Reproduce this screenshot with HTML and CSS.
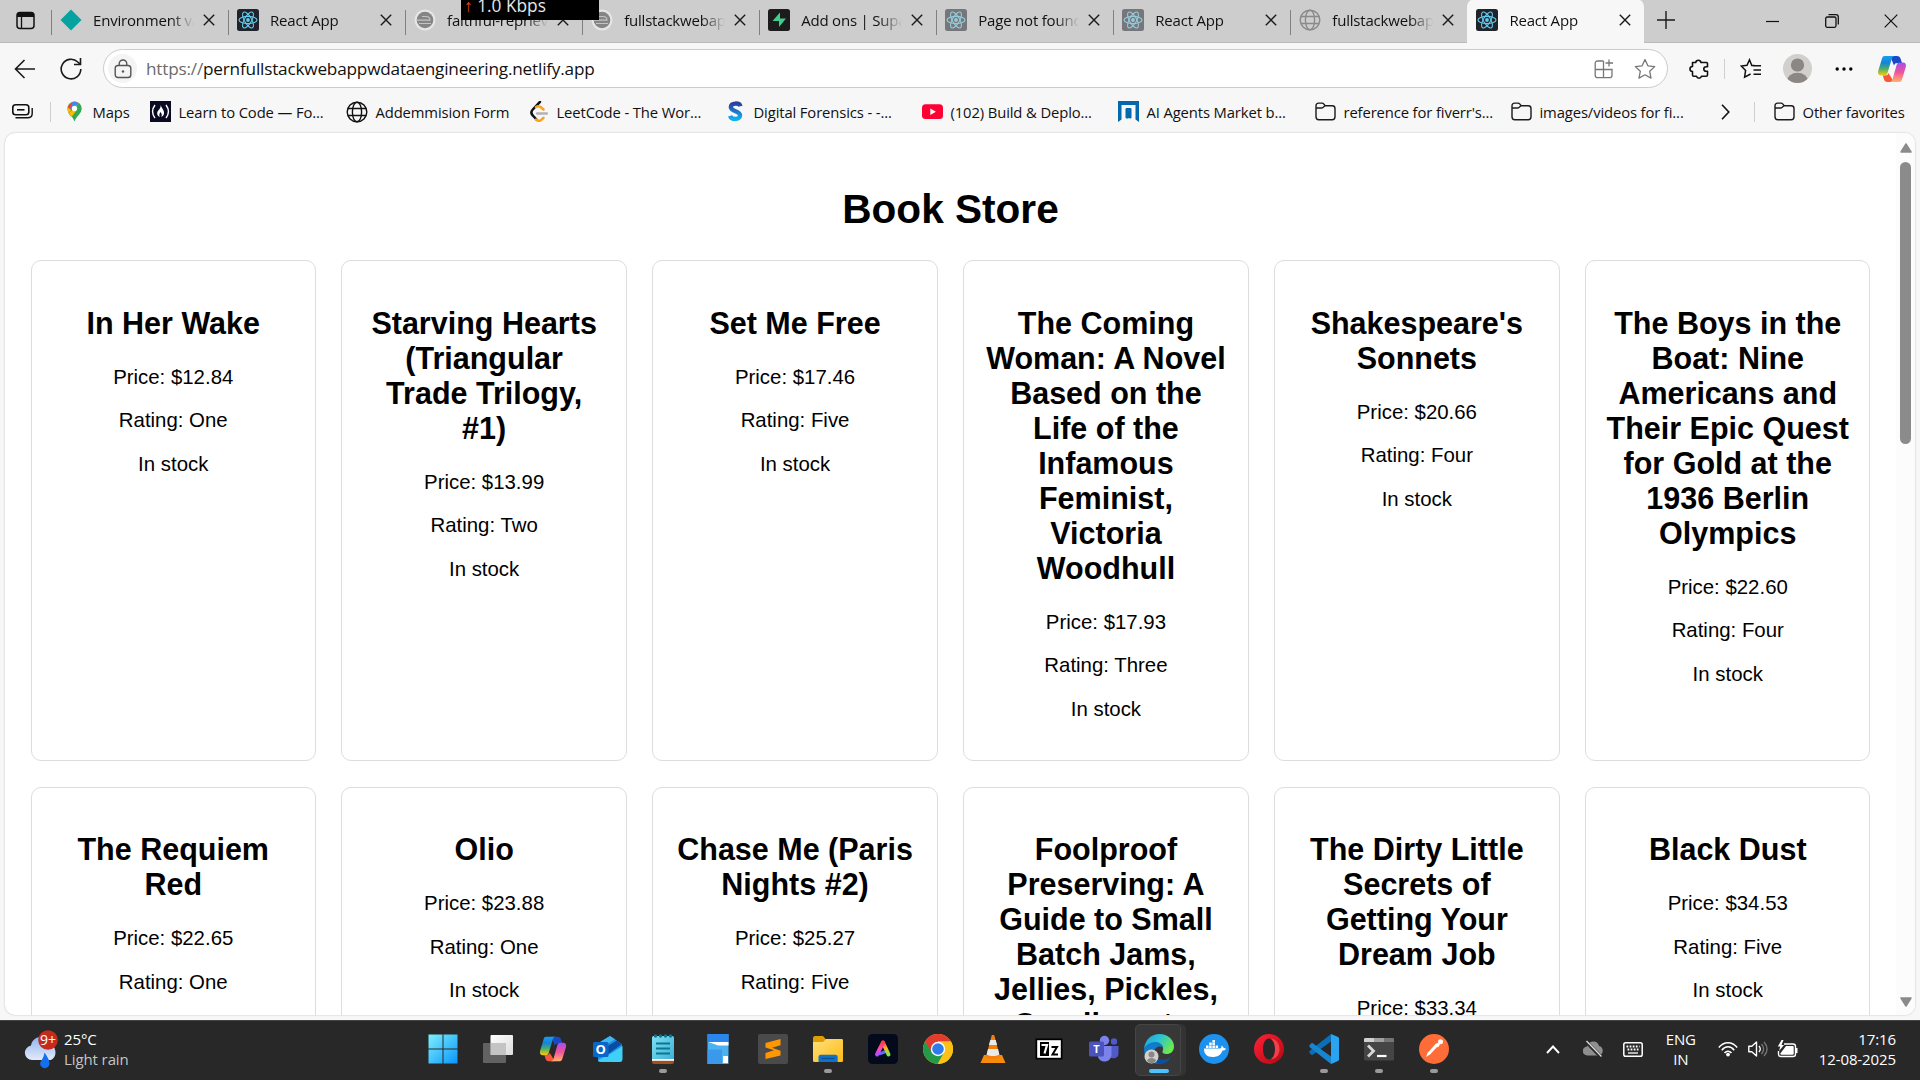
FILE: index.html
```html
<!DOCTYPE html>
<html lang="en">
<head>
<meta charset="utf-8">
<title>React App</title>
<link rel="stylesheet" href="styles.css">
</head>
<body>
<svg class="defs" width="0" height="0">
  <defs>
    <linearGradient id="cpA" x1="0" y1="0" x2="0" y2="1"><stop offset="0" stop-color="#1b9df0"/><stop offset=".35" stop-color="#1583d8"/><stop offset=".65" stop-color="#4cae68"/><stop offset="1" stop-color="#ffcb0c"/></linearGradient>
    <linearGradient id="cpB" x1="0" y1="0" x2="0" y2="1"><stop offset="0" stop-color="#a44df0"/><stop offset=".5" stop-color="#f0539b"/><stop offset="1" stop-color="#ffb26b"/></linearGradient>
    <linearGradient id="win" x1="0" y1="0" x2="1" y2="1"><stop offset="0" stop-color="#7df0ff"/><stop offset="1" stop-color="#0a95f8"/></linearGradient>
    <linearGradient id="tv" x1="0" y1="0" x2="1" y2="1"><stop offset="0" stop-color="#fff"/><stop offset="1" stop-color="#dcdcdc"/></linearGradient>
    <linearGradient id="fold" x1="0" y1="0" x2="1" y2="1"><stop offset="0" stop-color="#ffe07a"/><stop offset="1" stop-color="#fdbb16"/></linearGradient>
    <linearGradient id="note" x1="0" y1="0" x2="1" y2="1"><stop offset="0" stop-color="#7fe0f2"/><stop offset="1" stop-color="#3bb0d4"/></linearGradient>
    <linearGradient id="rb2" x1="0" y1="0" x2="0" y2="1"><stop offset="0" stop-color="#ff3a55"/><stop offset=".45" stop-color="#ffb21f"/><stop offset="1" stop-color="#7ce84e"/></linearGradient>
    <linearGradient id="rb3" x1="0" y1="0" x2="0" y2="1"><stop offset="0" stop-color="#ff3a4a"/><stop offset=".5" stop-color="#ff4bb0"/><stop offset="1" stop-color="#b04bff"/></linearGradient>
    <linearGradient id="edgeA" x1="0" y1="0" x2="1" y2=".5"><stop offset="0" stop-color="#1f9de0"/><stop offset=".5" stop-color="#2cc3d2"/><stop offset="1" stop-color="#6be852"/></linearGradient>
    <linearGradient id="cloud" x1="0" y1="0" x2="0" y2="1"><stop offset="0" stop-color="#8fb4f2"/><stop offset="1" stop-color="#e3eaf8"/></linearGradient>
    <linearGradient id="sl" x1="0" y1="0" x2="0" y2="1"><stop offset="0" stop-color="#2b3fa0"/><stop offset="1" stop-color="#0fb0ee"/></linearGradient>
    <linearGradient id="op" x1="0" y1="0" x2="1" y2="1"><stop offset="0" stop-color="#ff2238"/><stop offset="1" stop-color="#b3060f"/></linearGradient>
    <symbol id="copilot" viewBox="0 0 30 30">
      <path d="M13 2h7c2 0 3 1 3.500 2.500L25 9h-4.500c-2 0-3 .8-3.500 2.500z" fill="#1a49c8"/>
      <path d="M7.500 2H18c-2 0-2.800 1.400-3.300 3L10.500 19c-.6 1.900-1.700 2.600-3.500 2.600H4.200C1.500 21.600.5 19.600 1.200 17L5 4.500C5.500 2.800 6.300 2 7.500 2z" fill="url(#cpA)"/>
      <path d="M17 28h-6.500c-2 0-3-1-3.500-2.500L5.800 21.500H8c2 0 3-.8 3.500-2.500z" fill="#f8583a"/>
      <path d="M22.500 28H12.300c2 0 2.800-1.400 3.300-3L19.600 11c.6-1.900 1.700-2.600 3.500-2.600h2.700c2.700 0 3.700 2 3 4.600L25 25.500c-.5 1.700-1.300 2.500-2.500 2.500z" fill="url(#cpB)"/>
    </symbol>
    <symbol id="atom" viewBox="0 0 22 22">
      <rect width="22" height="22" rx="2.500" fill="#20232a"/>
      <g fill="none" stroke="#61c9ea" stroke-width="1.100"><ellipse cx="11" cy="11" rx="9" ry="3.600"/><ellipse cx="11" cy="11" rx="9" ry="3.600" transform="rotate(60 11 11)"/><ellipse cx="11" cy="11" rx="9" ry="3.600" transform="rotate(120 11 11)"/></g>
      <circle cx="11" cy="11" r="1.900" fill="#61c9ea"/>
    </symbol>
    <symbol id="x" viewBox="0 0 12 12"><path d="M.8.8l10.400 10.400M11.200.8L.8 11.200" stroke="#1a1a1a" stroke-width="1.400" fill="none"/></symbol>
    <symbol id="globe" viewBox="0 0 22 22"><g fill="none" stroke="currentColor" stroke-width="1.400"><circle cx="11" cy="11" r="9.800"/><ellipse cx="11" cy="11" rx="4.600" ry="9.800"/><path d="M2 7.500h18M2 14.500h18"/></g></symbol>
    <symbol id="disc" viewBox="0 0 22 22"><circle cx="11" cy="11" r="10.500" fill="#e6e6e6"/><circle cx="11" cy="11" r="8.300" fill="#858585"/><path d="M8 7.500h4c2.500 0 4 1.500 4 3.700H3M5 14.500h12" stroke="#c4c4c4" stroke-width="1.200" fill="none"/></symbol>
    <symbol id="folder" viewBox="0 0 22 20"><path d="M1 4.200C1 2.300 2 1.200 3.800 1.200h3.500c.9 0 1.500.4 2 1L10.700 4H18c2 0 3 1.100 3 2.900v8.600c0 2-1.100 3.100-3 3.100H4c-2 0-3-1.100-3-3.100zM1 6.300h5.800c.8 0 1.300-.3 1.800-.8L10.500 4" fill="none" stroke="#1c1c1c" stroke-width="1.500"/></symbol>
  </defs>
</svg>

<header class="tabs">
  <svg class="tabmenu" width="19" height="19" viewBox="0 0 19 19"><rect x="1" y="1.500" width="17" height="16" rx="3" fill="none" stroke="#111" stroke-width="1.500"/><path d="M1 6V4.500c0-2 1-3 3-3h11c2 0 3 1 3 3V6z" fill="#111"/><path d="M5.500 6v11" stroke="#111" stroke-width="1.300"/></svg>
  <div class="tab"><svg class="fav" viewBox="0 0 22 22"><path d="M11 .5L21.500 11 11 21.500.5 11z" fill="#05a3a0"/></svg><span class="title">Environment variables</span><svg class="close"><use href="#x"/></svg></div>
  <div class="tab"><svg class="fav"><use href="#atom"/></svg><span class="title">React App</span><svg class="close"><use href="#x"/></svg></div>
  <div class="tab"><svg class="fav"><use href="#disc"/></svg><span class="title">faithful-reprieve</span><svg class="close"><use href="#x"/></svg></div>
  <div class="tab"><svg class="fav"><use href="#disc"/></svg><span class="title">fullstackwebapp</span><svg class="close"><use href="#x"/></svg></div>
  <div class="tab"><svg class="fav" viewBox="0 0 22 22"><rect width="22" height="22" rx="2.500" fill="#1c1c1c"/><path d="M12 3.500v6h6L11 18v-6H4.500z" fill="#3ecf8e"/></svg><span class="title">Add ons | Supabase</span><svg class="close"><use href="#x"/></svg></div>
  <div class="tab"><svg class="fav faded"><use href="#atom"/></svg><span class="title">Page not found</span><svg class="close"><use href="#x"/></svg></div>
  <div class="tab"><svg class="fav faded"><use href="#atom"/></svg><span class="title">React App</span><svg class="close"><use href="#x"/></svg></div>
  <div class="tab"><svg class="fav grey"><use href="#globe"/></svg><span class="title">fullstackwebapp</span><svg class="close"><use href="#x"/></svg></div>
  <div class="tab active"><svg class="fav"><use href="#atom"/></svg><span class="title">React App</span><svg class="close"><use href="#x"/></svg></div>
  <svg class="plus" width="18" height="18" viewBox="0 0 18 18"><path d="M9 0v18M0 9h18" stroke="#1a1a1a" stroke-width="1.400"/></svg>
  <div class="winctl">
    <svg width="14" height="14" viewBox="0 0 14 14"><path d="M0 7.500h13" stroke="#111" stroke-width="1.200"/></svg>
    <svg width="14" height="14" viewBox="0 0 14 14"><rect x=".7" y="3" width="10.300" height="10.300" rx="1.500" fill="none" stroke="#111" stroke-width="1.300"/><path d="M3.500.7H11c1.500 0 2.300.8 2.300 2.300V10.500" fill="none" stroke="#111" stroke-width="1.300"/></svg>
    <svg width="14" height="14" viewBox="0 0 14 14"><path d="M.7.7l12.600 12.600M13.300.7L.7 13.300" stroke="#111" stroke-width="1.200"/></svg>
  </div>
</header>
<div class="speed"><b>↑</b> 1.0 Kbps</div>

<nav class="toolbar">
  <svg class="back" width="22" height="20" viewBox="0 0 22 20"><path d="M10.500 1L1.500 10l9 9M1.500 10H21" fill="none" stroke="#1a1a1a" stroke-width="1.600"/></svg>
  <svg class="reload" width="22" height="22" viewBox="0 0 22 22"><path d="M20.800 11A9.800 9.800 0 1 1 17.800 4L20 6M20.500 0v6.500H14" fill="none" stroke="#1a1a1a" stroke-width="1.600"/></svg>
  <div class="address">
    <span class="lock"><svg width="18" height="20" viewBox="0 0 18 20"><rect x="1.200" y="6.500" width="15.600" height="12" rx="2.800" fill="none" stroke="#555" stroke-width="1.400"/><path d="M5.200 6.500V4.800a3.800 3.800 0 0 1 7.600 0v1.700" fill="none" stroke="#555" stroke-width="1.400"/><circle cx="9" cy="12.500" r="1.200" fill="#555"/></svg></span>
    <span class="url"><i>https://</i>pernfullstackwebappwdataengineering.netlify.app</span>
    <svg class="apps" width="20" height="20" viewBox="0 0 20 20"><path d="M9.500 2H3.800C2 2 1.200 2.800 1.200 4.500v11.700c0 1.700.8 2.500 2.600 2.500h11.700c1.700 0 2.500-.8 2.500-2.500v-5.700H1.200M9.500 2v16.700M15 .5v7M11.500 4h7.500" fill="none" stroke="#777" stroke-width="1.300"/></svg>
    <svg width="22" height="22" viewBox="0 0 22 22"><path d="M11 1.500l2.900 6.300 6.800.8-5 4.700 1.300 6.800L11 16.800l-6 3.300 1.300-6.800-5-4.700 6.800-.8z" fill="none" stroke="#777" stroke-width="1.300" stroke-linejoin="round"/></svg>
  </div>
  <svg class="ext" width="20" height="22" viewBox="0 0 20 22"><path d="M3.500 4.500h3.200a2.700 2.700 0 0 1 5.300 0h5.500c.6 0 1 .4 1 1v3.200h-1.400a2.300 2.300 0 0 0 0 4.600h1.400V17c0 .9-.4 1.300-1.300 1.300h-4.700a2.600 2.600 0 0 1-5 0H4.700c-.8 0-1.200-.4-1.200-1.300v-3.500a2.500 2.500 0 0 1 0-5z" fill="none" stroke="#111" stroke-width="1.600" stroke-linejoin="round"/></svg>
  <span class="rule"></span>
  <svg class="favs" width="22" height="22" viewBox="0 0 22 22"><path d="M12 7.500h-.2L9.500 1.800 7 7.300l-5.700.8 4.300 4.300-1 6.800 6-3.200M14.500 7.500L12 7.300M13 7.800h8M13.500 12h7.500M13.500 16.200h7.500" fill="none" stroke="#111" stroke-width="1.500"/></svg>
  <svg class="avatar" width="29" height="29" viewBox="0 0 29 29"><clipPath id="av"><circle cx="14.500" cy="14.500" r="14.500"/></clipPath><g clip-path="url(#av)"><rect width="29" height="29" fill="#d2d0cc"/><circle cx="14.500" cy="11" r="6.600" fill="#8a8784"/><ellipse cx="14.500" cy="27" rx="10.500" ry="8.300" fill="#8a8784"/></g></svg>
  <svg class="dots" width="18" height="4" viewBox="0 0 18 4"><circle cx="2.200" cy="2" r="1.700"/><circle cx="9" cy="2" r="1.700"/><circle cx="15.800" cy="2" r="1.700"/></svg>
  <svg class="pilot" width="30" height="30"><use href="#copilot"/></svg>
</nav>

<nav class="bookmarks">
  <svg class="stack" width="21" height="15" viewBox="0 0 21 15"><rect x=".8" y=".8" width="16" height="10" rx="2.800" fill="none" stroke="#111" stroke-width="1.600"/><path d="M5 5.800h7.500" stroke="#111" stroke-width="1.600"/><path d="M3.500 13.800h12c3.200 0 4.700-1.500 4.700-4.300V4" fill="none" stroke="#111" stroke-width="1.400"/></svg>
  <span class="rule"></span>
  <a><svg width="21" height="21" viewBox="0 0 21 21"><path d="M10.500.5a7 7 0 0 1 7 7.200c0 5.300-5 7-7 12.800-2-5.800-7-7.500-7-12.800a7 7 0 0 1 7-7.200z" fill="#34a853"/><path d="M4.500 11.800L15.200 2.600A7 7 0 0 0 3.500 7.700c0 1.600.4 3 1 4.100z" fill="#fbbc04"/><path d="M3.700 6.200L8 9.500 14 1.800A7 7 0 0 0 3.700 6.200z" fill="#ea4335"/><path d="M8.500.9l-2.700 7L10 6l4.800-3.500A7 7 0 0 0 8.500.9z" fill="#4285f4"/><path d="M14.800 2.300L9 9.500l-4.500 3 2.500 3 10-6c1.200-3-.3-6-2.200-7.200z" fill="#34a853"/><path d="M4.500 12.300L9.500 8 12 10l-4.500 6z" fill="#fbbc04"/><circle cx="10.500" cy="7.500" r="2.700" fill="#fff"/></svg><span>Maps</span></a>
  <a><svg width="21" height="21" viewBox="0 0 21 21"><rect width="21" height="21" fill="#0a0a23"/><path d="M5 4c-3 4-3 9 0 13M16 4c3 4 3 9 0 13" fill="none" stroke="#fff" stroke-width="1.400"/><path d="M10.700 4c.8 3.500 3.800 5 3.300 8.500-.3 1.800-1.300 2.800-2.700 3.400 1-2.300.2-3.700-.8-4.900-1 1.600-1.700 3-.6 5C8 15.300 7 14 7.200 12c.3-3 3.800-4 3.500-8z" fill="#fff"/></svg><span>Learn to Code — Fo...</span></a>
  <a><svg width="22" height="22"><use href="#globe"/></svg><span>Addemmision Form</span></a>
  <a><svg width="21" height="21" viewBox="0 0 21 21"><path d="M12 .8L4.800 8.500c-2 2.200-2 4 0 6L8.500 18.500" fill="none" stroke="#111" stroke-width="2.500" stroke-linecap="round"/><path d="M8 6c1.800-1.200 3.600-1 5.200.5l2.300 2M8 18.500c2 1.800 4 1.800 5.700 0l1.800-1.700" fill="none" stroke="#ffa116" stroke-width="2.500" stroke-linecap="round"/><path d="M9 12.500h10" stroke="#b3b3b3" stroke-width="2.300" stroke-linecap="round"/></svg><span>LeetCode - The Wor...</span></a>
  <a><svg width="21" height="21" viewBox="0 0 21 21"><path d="M15.500 5.200C14.500 1.500 6 1.500 5.800 6c-.1 4.800 9.400 3.800 9.300 8.500-.1 4.500-8.800 4.500-10 .3" fill="none" stroke="url(#sl)" stroke-width="4.300"/></svg><span>Digital Forensics - -...</span></a>
  <a><svg width="21" height="21" viewBox="0 0 21 21"><rect x="0" y="3.200" width="21" height="14.800" rx="3.500" fill="#ff0033"/><path d="M8.300 7.500l5.600 3.200-5.600 3.200z" fill="#fff"/></svg><span>(102) Build &amp; Deplo...</span></a>
  <a><svg width="21" height="21" viewBox="0 0 21 21"><path d="M0 0h21v21l-3.500-2.500V4h-14v14.500L0 21z" fill="#0568ac"/><path d="M8 17V7.500h5V17h-1.500V9.500h-1V17z" fill="#0568ac" stroke="#0568ac"/></svg><span>AI Agents Market b...</span></a>
  <a><svg width="21" height="19"><use href="#folder"/></svg><span>reference for fiverr's...</span></a>
  <a><svg width="21" height="19"><use href="#folder"/></svg><span>images/videos for fi...</span></a>
  <svg class="more" width="9" height="16" viewBox="0 0 9 16"><path d="M1 .8L7.800 8 1 15.200" fill="none" stroke="#111" stroke-width="1.600"/></svg>
  <span class="rule"></span>
  <a><svg width="21" height="19"><use href="#folder"/></svg><span>Other favorites</span></a>
</nav>

<div class="frame">
  <main class="page">
    <h1>Book Store</h1>
    <section class="grid">
      <article><h2>In Her Wake</h2><p>Price: $12.84</p><p>Rating: One</p><p>In stock</p></article>
      <article><h2>Starving Hearts (Triangular Trade Trilogy, #1)</h2><p>Price: $13.99</p><p>Rating: Two</p><p>In stock</p></article>
      <article><h2>Set Me Free</h2><p>Price: $17.46</p><p>Rating: Five</p><p>In stock</p></article>
      <article><h2>The Coming Woman: A Novel Based on the Life of the Infamous Feminist, Victoria Woodhull</h2><p>Price: $17.93</p><p>Rating: Three</p><p>In stock</p></article>
      <article><h2>Shakespeare's Sonnets</h2><p>Price: $20.66</p><p>Rating: Four</p><p>In stock</p></article>
      <article><h2>The Boys in the Boat: Nine Americans and Their Epic Quest for Gold at the 1936 Berlin Olympics</h2><p>Price: $22.60</p><p>Rating: Four</p><p>In stock</p></article>
      <article><h2>The Requiem Red</h2><p>Price: $22.65</p><p>Rating: One</p><p>In stock</p></article>
      <article><h2>Olio</h2><p>Price: $23.88</p><p>Rating: One</p><p>In stock</p></article>
      <article><h2>Chase Me (Paris Nights #2)</h2><p>Price: $25.27</p><p>Rating: Five</p><p>In stock</p></article>
      <article><h2>Foolproof Preserving: A Guide to Small Batch Jams, Jellies, Pickles, Condiments, and More</h2><p>Price: $30.52</p><p>Rating: Three</p><p>In stock</p></article>
      <article><h2>The Dirty Little Secrets of Getting Your Dream Job</h2><p>Price: $33.34</p><p>Rating: Four</p><p>In stock</p></article>
      <article><h2>Black Dust</h2><p>Price: $34.53</p><p>Rating: Five</p><p>In stock</p></article>
    </section>
  </main>
  <aside class="scroll">
    <svg width="12" height="10" viewBox="0 0 12 10"><path d="M6 1l5 8H1z" fill="#8b8b8b" stroke="#8b8b8b" stroke-width="1.500" stroke-linejoin="round"/></svg>
    <span class="thumb"></span>
    <svg width="12" height="10" viewBox="0 0 12 10"><path d="M6 9L1 1h10z" fill="#8b8b8b" stroke="#8b8b8b" stroke-width="1.500" stroke-linejoin="round"/></svg>
  </aside>
</div>

<footer class="taskbar">
  <div class="weather">
    <svg width="36" height="40" viewBox="0 0 36 40"><path d="M8 32a7.300 7.300 0 0 1-1-14.500C8 12 12 9 17 9s9 3 10 8c5 1 7 12 0 15z" fill="url(#cloud)" transform="translate(0 -1)"/><path d="M20.500 22c3.500 5 5 8 5 11a4.700 4.700 0 0 1-9.400 0c0-2 3.700-5 4.400-11z" fill="#1470f0" transform="translate(0 1.500)"/><circle cx="24" cy="11" r="9.800" fill="#c42b1c"/><text x="24" y="16" text-anchor="middle" class="badge">9+</text></svg>
    <div><span>25°C</span><span class="dim">Light rain</span></div>
  </div>
  <div class="apps-row">
    <span class="app"><svg viewBox="0 0 30 30"><path d="M.5.500h14v14H.5zM15.500.500h14v14h-14zM.5 15.500h14v14H.5zM15.500 15.500h14v14h-14z" fill="url(#win)"/></svg></span>
    <span class="app"><svg viewBox="0 0 30 30"><rect x="7.500" y="1" width="22.500" height="20" rx="1" fill="url(#tv)"/><rect x="0" y="9" width="23" height="20" rx="1" fill="#707070" opacity=".8"/><path d="M7.500 9H23v12H7.500z" fill="#c4c4c4"/></svg></span>
    <span class="app"><svg viewBox="0 0 32 32"><use href="#copilot" x="1" y="1" width="30" height="30"/></svg></span>
    <span class="app"><svg viewBox="0 0 30 30"><path d="M5 9L17 2l12 8v15a3 3 0 0 1-3 3H8a3 3 0 0 1-3-3z" fill="#1e8fe0"/><path d="M17 2l5 3.200L8 14V7.500z" fill="#3fb6f2"/><path d="M29 10L13 21.500V13L24 6.500z" fill="#0a4ba3"/><path d="M29.500 12v13a3 3 0 0 1-3 3H8c-2 0-3-1-3-2l12-6z" fill="#3fd0f8"/><rect y="8" width="15.500" height="15" rx="1.500" fill="#0a66c8"/><text x="7.700" y="20" text-anchor="middle" class="glyph">O</text></svg></span>
    <span class="app run"><svg viewBox="0 0 30 30"><rect x="4" y="2" width="22" height="25" rx="1.500" fill="url(#note)"/><path d="M4 25.500h22V28a2 2 0 0 1-2 2H6a2 2 0 0 1-2-2z" fill="#a4501a"/><path d="M4 25h22v1.800H4z" fill="#fff"/><path d="M8 9.500h14M8 14.500h14M8 19.500h14" stroke="#0b7794" stroke-width="1.900"/><g fill="#0b7794"><circle cx="7.500" cy="2" r="1.700"/><circle cx="12.500" cy="2" r="1.700"/><circle cx="17.500" cy="2" r="1.700"/><circle cx="22.500" cy="2" r="1.700"/></g></svg></span>
    <span class="app"><svg viewBox="0 0 30 30"><path d="M4.500 0h21v30h-21z" fill="#49b3f2"/><path d="M4.500 0h21v8h-21z" fill="#2a86ec"/><path d="M5.500 8h20v3.500H15z" fill="#fff"/><path d="M4.500 15.500H19V30H4.500z" fill="#3a99ea"/><path d="M20 22h5v7h-5z" fill="#fff"/></svg></span>
    <span class="app"><svg viewBox="0 0 30 30"><rect width="30" height="30" rx="2" fill="#4a4a4a"/><path d="M22.500 5v6.200L14 13.800l8.500 3v4.700L7.500 25v-6l8.500-2.800-8.500-2.700V9z" fill="#ff9800"/></svg></span>
    <span class="app run"><svg viewBox="0 0 30 30"><path d="M0 4.500C0 3 .8 2 2 2h8l3 3.500H15V10H0z" fill="#dd9d06"/><path d="M0 8h10l3-3h15.500c1 0 1.500.6 1.500 1.500v20c0 1-.6 1.500-1.500 1.500h-27C.5 28 0 27.400 0 26.500z" fill="url(#fold)"/><path d="M5.500 28v-5c0-1.400 1-2.300 2.300-2.300h14.500c1.300 0 2.400.9 2.400 2.300v5z" fill="#0f72c8"/><path d="M8.500 24.500h13" stroke="#0a4f96" stroke-width="1.300"/></svg></span>
    <span class="app"><svg viewBox="0 0 30 30"><rect width="30" height="30" rx="4.500" fill="#020a1c"/><g fill="none" stroke-width="4" stroke-linecap="round"><path d="M11.500 19.800l5-1.800" stroke="#5b6bff" stroke-width="3"/><path d="M15 8.500L20.500 20.500" stroke="url(#rb2)"/><path d="M15 8.500L9 20.500" stroke="url(#rb3)"/></g></svg></span>
    <span class="app"><svg viewBox="0 0 30 30"><circle cx="15" cy="15" r="15" fill="#fbc116"/><path d="M15 15L8 19 2 7.500A15 15 0 0 1 28 7.500H15z" fill="#e33b2e"/><path d="M2 7.500A15 15 0 0 0 14.500 30L21 18.500l-12 0z" fill="#229a49"/><path d="M28 7.500H15l6.500 11L15 30A15 15 0 0 0 28 7.500z" fill="#fbc116"/><circle cx="15" cy="15" r="7.200" fill="#fff"/><circle cx="15" cy="15" r="5.800" fill="#2f7bea"/></svg></span>
    <span class="app"><svg viewBox="0 0 30 30"><path d="M6 21h18l3.500 8h-25z" fill="#f98b0c"/><path d="M13.800 1h2.400L22 23c-3 3-11 3-14 0z" fill="#f47f0a"/><path d="M12.300 6h5.400l1.400 5h-8.200zM10 15h10l1.400 5.500c-4 2-8.800 2-12.800 0z" fill="#e9e9e9"/></svg></span>
    <span class="app"><svg viewBox="0 0 30 30"><rect x="1.500" y="4.500" width="27" height="21" fill="#000"/><rect x="3.200" y="6.200" width="23.600" height="17.600" fill="#fff"/><rect x="6" y="8" width="9" height="14" fill="#000"/><path d="M7.500 11h5.500l-2.500 8.500" fill="none" stroke="#fff" stroke-width="2.200"/><path d="M17.500 13h5.500l-4.500 7.500H24" fill="none" stroke="#000" stroke-width="2"/></svg></span>
    <span class="app"><svg viewBox="0 0 30 30"><circle cx="15.500" cy="6.500" r="4.700" fill="#7b83eb"/><circle cx="25" cy="7.500" r="3.200" fill="#5059c9"/><path d="M20 12h9.500v7.500a5 5 0 0 1-9.500 2z" fill="#5059c9"/><path d="M9 12h13.500v9a7 7 0 0 1-13.500 2z" fill="#7b83eb"/><rect y="7.500" width="15" height="15" rx="1.500" fill="#4b53bc"/><text x="7.500" y="19" text-anchor="middle" class="glyph small">T</text></svg></span>
    <span class="app current"><svg viewBox="0 0 30 30"><path d="M0 15C1 5 8 0 15.500 0 24 0 30 6 30 12.500c0 5-3.500 7.500-7.500 7.500-3 0-4.500-1.200-4-2.800 1.500-2.500.5-8-5.500-8.500C7 8.300 2 11 0 15z" fill="url(#edgeA)"/><path d="M0 15c1.500-4 6-7 11.500-7 4 0 7 2.500 7.500 6-3-3-9-1-9 5 0 5 4 9 8.500 10.500C8 31.500 0 25 0 15z" fill="#0f7cd0"/><path d="M10 18c0 5 5 8.500 10 7.500 3-.5 5.500-1.500 7-3C25 28 20 30.500 15 30 10 28 8 22 10 18z" fill="#0c4f9e"/><circle cx="7.500" cy="22.500" r="7" fill="#d2d0cc"/><circle cx="7.500" cy="20.500" r="3" fill="#8a8784"/><path d="M3 26.500c1-3.500 8-3.500 9 0-2 3.500-7 3.500-9 0z" fill="#8a8784"/></svg></span>
    <span class="app"><svg viewBox="0 0 30 30"><circle cx="15" cy="15" r="15" fill="#1d91ee"/><path d="M5 14.500h16c1 0 1.800-.8 1.400-3 1.400.7 2 1.500 2.200 2.500 1 0 1.900.2 2.400.7-.7 1.300-2 1.800-3.500 1.800C22 21 18.500 23 13.500 23 8 23 4.800 20 5 14.500zM7 11.500h2.500V14H7zM10.200 11.500h2.500V14h-2.500zM13.400 11.500h2.500V14h-2.500zM16.600 11.500h2.500V14h-2.500zM10.200 8.600h2.500v2.400h-2.500zM13.400 8.600h2.500v2.400h-2.500zM13.400 6h2.500v2.200h-2.500z" fill="#fff"/></svg></span>
    <span class="app"><svg viewBox="0 0 30 30"><path fill-rule="evenodd" d="M15 0a15 15 0 1 0 0 30 15 15 0 0 0 0-30zm0 4.500c3.500 0 6 4.500 6 10.500s-2.500 10.500-6 10.500S9 21 9 15 11.500 4.500 15 4.500z" fill="url(#op)"/><path d="M19 25c4.500-1.500 6.500-5.500 6.500-10S23.500 6.500 19 5l-2.500-.3C19.500 6 21 10 21 15s-1.500 9-4.500 10.300z" fill="#f0404c"/></svg></span>
    <span class="app run"><svg viewBox="0 0 30 30"><path d="M22 0v7.500L3 21.300.5 19v-2z" fill="#0b6fb8"/><path d="M22 30L.5 13v-2L3 8.700 22 22.500z" fill="#1686d2"/><path d="M22 0l6.500 2.800c1 .5 1.500 1 1.500 2v20.400c0 1-.5 1.500-1.500 2L22 30z" fill="#2aa4f0"/></svg></span>
    <span class="app run"><svg viewBox="0 0 30 30"><rect y="4" width="30" height="22.500" rx="1.500" fill="#454545"/><path d="M0 8V5.500C0 4.500.5 4 1.500 4H10v4z" fill="#d0d0d0"/><path d="M10 4h10v4H10z" fill="#a0a0a0"/><path d="M20 4h8.500c1 0 1.500.5 1.500 1.500V8H20z" fill="#757575"/><path d="M4 11.500l5.500 5.500L4 22.500" fill="none" stroke="#d8d8d8" stroke-width="2.800"/><path d="M13 22h9.500" stroke="#fff" stroke-width="2.200"/></svg></span>
    <span class="app run"><svg viewBox="0 0 30 30"><circle cx="15" cy="15" r="15" fill="#ff6c37"/><path d="M7 23l1.500-4 8.500-9.500 2.500 2L11 20.500z" fill="#fff"/><path d="M16 10.500l3.500-2 1.500 2-2 3z" fill="#fff"/><circle cx="21.500" cy="7.800" r="2.500" fill="#fff"/></svg></span>
  </div>
  <div class="tray">
    <svg class="t-chev" width="14" height="9" viewBox="0 0 14 9"><path d="M1 8l6-6.500L13 8" fill="none" stroke="#fff" stroke-width="1.900"/></svg>
    <svg class="t-cloud" width="20" height="18" viewBox="0 0 20 18"><path d="M4.500 15.500a4.500 4.500 0 0 1-.5-9C5 3 7.500 1.500 10.500 1.500c3 0 5 2 5.500 4.500 5 .8 5 9 0 9.500z" fill="#8f8f8f"/><path d="M2.500 1l15 15.500" stroke="#2a2a2a" stroke-width="3.500"/><path d="M3.500 1l15 15.500" stroke="#ddd" stroke-width="1.300"/></svg>
    <svg class="t-kb" width="20" height="15" viewBox="0 0 20 15"><rect x=".8" y=".8" width="18.400" height="13.400" rx="1.800" fill="none" stroke="#fff" stroke-width="1.500"/><path d="M3.500 4.500h13M4.500 7.500h11" stroke="#fff" stroke-width="1.800" stroke-dasharray="1.800 1.300"/><path d="M5 11h10" stroke="#fff" stroke-width="1.300"/></svg>
    <div class="lang"><span>ENG</span><span>IN</span></div>
    <svg class="t-wifi" width="20" height="16" viewBox="0 0 20 16"><g fill="none" stroke="#fff" stroke-width="1.500"><path d="M.8 6.500c5-6.500 13.400-6.500 18.400 0M3.800 9.200c3.500-4.500 9-4.500 12.400 0M6.500 12c2-2.500 5-2.500 7 0"/></g><circle cx="10" cy="13.600" r="1.900" fill="#fff"/></svg>
    <svg class="t-vol" width="20" height="18" viewBox="0 0 20 18"><path d="M.8 6.300h3L8.500 2v14l-4.700-4.300h-3z" fill="none" stroke="#fff" stroke-width="1.400" stroke-linejoin="round"/><path d="M11 6c1.700 2 1.700 4 0 6" fill="none" stroke="#fff" stroke-width="1.300"/><path d="M13.500 4c2.800 3.300 2.800 6.700 0 10M16 2c4 4.500 4 9.500 0 14" fill="none" stroke="#777" stroke-width="1.300"/></svg>
    <svg class="t-bat" width="22" height="18" viewBox="0 0 22 18"><path d="M7 4h9c1.500 0 2.500 1 2.500 2.300v8c0 1.400-1 2.200-2.500 2.200H3.800c-1.500 0-2.300-.8-2.300-2.200V11" fill="none" stroke="#fff" stroke-width="1.400"/><path d="M9 6h6.500c.8 0 1.200.4 1.200 1v6.500c0 .8-.4 1.200-1.200 1.200H4.500c-.8 0-1.200-.4-1.200-1.200z" fill="#fff"/><path d="M19.500 8v5" stroke="#fff" stroke-width="2"/><path d="M4.500 0L.8 6.500h2.500L2 11l5-6H4.500L6.500 0z" fill="#fff"/></svg>
    <div class="clock"><span>17:16</span><span>12-08-2025</span></div>
  </div>
</footer>
</body>
</html>
```
FILE: styles.css
```css
* { box-sizing: border-box; }
html, body { height: 100%; }
body {
  margin: 0;
  height: 1080px;
  overflow: hidden;
  display: flex;
  flex-direction: column;
  background: #f7f7f7;
  font-family: "Open Sans", "Noto Sans", sans-serif;
  font-size: 15px;
  color: #111;
  position: relative;
}
svg { display: block; flex: none; }
.defs { position: absolute; }

/* tab strip */
.tabs {
  flex: none;
  height: 43px;
  display: flex;
  align-items: center;
  background: #cdcdcd;
  border-bottom: 1px solid #bababa;
}
.tabmenu { margin: 0 16px 2px 16px; }
.tab {
  width: 177.050px;
  height: 43px;
  display: flex;
  align-items: center;
  padding: 0 13px 2px 9px;
  position: relative;
}
.tab::before {
  content: "";
  position: absolute;
  left: 0;
  top: 10px;
  width: 1px;
  height: 25px;
  background: #808080;
}
.fav { width: 22px; height: 22px; }
.fav.faded { opacity: .5; }
.fav.grey { color: #8a8a8a; }
.title {
  width: 101px;
  margin-left: 11px;
  margin-right: 9px;
  overflow: hidden;
  white-space: nowrap;
  font-size: 15px;
  letter-spacing: -.2px;
  mask-image: linear-gradient(to right, #000 78px, transparent 101px);
}
.close { width: 12px; height: 12px; }
.tab.active {
  height: 44px;
  background: #f7f7f7;
  border-radius: 8px 8px 0 0;
}
.tab.active::before { display: none; }
.plus { margin: 0 auto 2px 13px; }
.winctl { display: flex; gap: 45px; margin-right: 22px; }
.speed {
  position: absolute;
  left: 461px;
  top: 0;
  width: 138px;
  height: 20px;
  padding-left: 3px;
  background: #000;
  color: #e6e6e6;
  font-size: 17.300px;
  line-height: 11px;
  white-space: nowrap;
}
.speed b { color: #f04b10; }

/* address bar */
.toolbar {
  flex: none;
  height: 47px;
  padding-top: 4px;
  display: flex;
  align-items: center;
}
.back { margin-left: 14px; }
.reload { margin-left: 24px; }
.address {
  width: 1565px;
  height: 39px;
  margin-left: 21px;
  padding: 0 11px 0 4px;
  display: flex;
  align-items: center;
  background: #fff;
  border: 1px solid #cbcbcb;
  border-radius: 20px;
}
.lock {
  width: 29px;
  height: 29px;
  border-radius: 50%;
  background: #f4f4f4;
  display: grid;
  place-items: center;
}
.url { margin-left: 9px; flex: 1; font-size: 17.200px; letter-spacing: -.2px; }
.url i { font-style: normal; color: #6b6b6b; }
.apps { margin-right: 20px; }
.ext { margin-left: 21px; }
.rule { width: 1px; height: 20px; background: #cfcfcf; }
.toolbar .rule { margin-left: 15px; }
.favs { margin-left: 15px; }
.avatar { margin-left: 21px; }
.dots { margin-left: 23px; }
.pilot { margin-left: 24px; }

/* favourites bar */
.bookmarks {
  flex: none;
  height: 43px;
  display: grid;
  grid-template-columns: 50px 14px 86px 196px 182px 197px 197px 196px 197px 196px 210px 33px 20px auto;
  align-items: center;
}
.stack { margin-left: 12px; }
.bookmarks a {
  display: flex;
  align-items: center;
  gap: 7.500px;
  font-size: 14.800px;
  letter-spacing: -.12px;
  white-space: nowrap;
}

/* page viewport */
.frame {
  flex: none;
  width: 1910px;
  height: 882px;
  margin-left: 5px;
  display: flex;
  overflow: hidden;
  background: #fff;
  border-radius: 10px;
  box-shadow: 0 0 2px rgba(0, 0, 0, .25);
}
.page {
  width: 1891px;
  padding: 25.600px 25.600px 0;
  font-family: "Liberation Sans", Arial, sans-serif;
  font-size: 20.400px;
  line-height: 23px;
  color: #000;
  text-align: center;
}
.page h1 { margin: 27px 0 28.600px; font-size: 40.600px; line-height: 46px; }
.grid { display: grid; grid-template-columns: repeat(6, 1fr); gap: 25.600px; }
.grid article {
  min-width: 0;
  padding: 19.200px 19.200px 18.800px;
  border: 1px solid #ddd;
  border-radius: 10px;
}
.grid h2 { margin: 25.480px 0 25px; font-size: 30.500px; line-height: 35px; }
.grid p { margin: 20.480px 0; }
.scroll {
  width: 19px;
  padding: 10px 0 8px;
  display: flex;
  flex-direction: column;
  align-items: center;
  background: #fcfcfc;
}
.thumb { width: 11px; height: 282px; margin: 9px 0 auto; border-radius: 6px; background: #8b8b8b; }

/* taskbar */
.taskbar {
  flex: none;
  height: 60px;
  margin-top: 5px;
  padding-bottom: 3px;
  display: flex;
  align-items: center;
  background: #282828;
  border-top: 1px solid #444;
  color: #fff;
  font-size: 15px;
  line-height: 20px;
  letter-spacing: -.1px;
}
.weather { width: 415px; display: flex; align-items: center; padding-left: 24px; gap: 4px; }
.weather div, .lang, .clock { display: flex; flex-direction: column; }
.dim { color: #c4c4c4; }
.badge { font-size: 14px; fill: #fff; }
.apps-row { display: flex; align-items: center; }
.app { width: 55.100px; height: 50px; display: grid; place-items: center; position: relative; }
.app svg { width: 30px; height: 30px; position: relative; }
.glyph { font: bold 13px "Open Sans", sans-serif; fill: #fff; }
.glyph.small { font-size: 11px; }
.run::after, .current::after {
  content: "";
  position: absolute;
  left: 23.500px;
  bottom: 1px;
  width: 8px;
  height: 4px;
  border-radius: 2px;
  background: #9a9a9a;
}
.current::after { width: 20px; left: 17.500px; background: #4cc2ff; }
.current::before {
  content: "";
  position: absolute;
  left: 4px;
  top: 0;
  width: 44px;
  height: 50px;
  border: 1px solid #454545;
  border-radius: 5px;
  background: #383838;
  box-shadow: 5px 0 0 #333;
}
.tray { flex: 1; display: flex; align-items: center; padding-right: 24px; }
.t-chev { margin-left: 84px; }
.t-cloud { margin-left: 23px; }
.t-kb { margin-left: 20px; }
.lang { width: 44px; margin-left: 16px; text-align: center; }
.t-wifi { margin-left: 15px; }
.t-vol { margin-left: 10px; }
.t-bat { margin-left: 9px; }
.clock { margin-left: auto; text-align: right; }
```
